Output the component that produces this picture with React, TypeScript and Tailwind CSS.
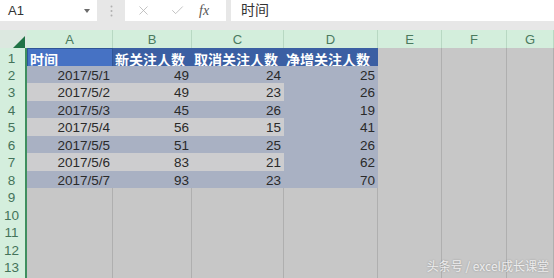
import React from "react";
import { X, Check } from "lucide-react";

const rows: [string, number, number, number][] = [
  ["2017/5/1", 49, 24, 25],
  ["2017/5/2", 49, 23, 26],
  ["2017/5/3", 45, 26, 19],
  ["2017/5/4", 56, 15, 41],
  ["2017/5/5", 51, 25, 26],
  ["2017/5/6", 83, 21, 62],
  ["2017/5/7", 93, 23, 70],
];

const cols = "grid grid-cols-[27px_86px_79px_92px_94px_64px_65px_1fr]";

const RowHead = ({ n }: { n?: number }) => (
  <div className="flex items-center justify-center border-r-2 border-r-[#3f8f5f] border-b border-b-[#bcd9c6] bg-[#d4eedd] pr-[2px] text-[13.5px] text-[#44735a]">
    {n}
  </div>
);

const Empty = () => <div className="border-r border-b border-[#afafaf] bg-[#c7c7c7]" />;

const App = () => {
  return (
    <div className="relative h-[278px] w-[554px] overflow-hidden bg-[#e7e7e7] font-['Liberation_Sans','Noto_Sans_CJK_SC',sans-serif]">
      {/* formula bar */}
      <div className="flex h-[21px]">
        <div className="flex w-[97px] items-center justify-between bg-white pl-[8px] pr-[7px] text-[13px] text-[#333]">
          <span>A1</span>
          <svg width="6" height="4" viewBox="0 0 6 4">
            <path d="M0 0h6L3 4z" fill="#6b6b6b" />
          </svg>
        </div>
        <div className="flex w-[28px] items-center justify-center">
          <svg width="3" height="12" viewBox="0 0 3 12">
            <circle cx="1.5" cy="1.5" r="1" fill="#b0b0b0" />
            <circle cx="1.5" cy="6" r="1" fill="#b0b0b0" />
            <circle cx="1.5" cy="10.5" r="1" fill="#b0b0b0" />
          </svg>
        </div>
        <div className="flex w-[101px] items-center bg-white pl-[11px]">
          <X size={15} strokeWidth={1.3} className="text-[#b5b5b5]" />
          <Check size={15} strokeWidth={1.3} className="ml-[19px] text-[#b5b5b5]" />
          <span className="ml-[14px] font-['Liberation_Serif',serif] text-[14px] italic text-[#555]">
            fx
          </span>
        </div>
        <div className="w-[5px]" />
        <div className="flex flex-1 items-center bg-white pl-[10px] text-[14px] text-[#333]">时间</div>
      </div>
      <div className="h-[9px]" />

      {/* column headers */}
      <div className={`${cols} h-[18px] border-b-2 border-b-[#3f8f5f]`}>
        <div className="flex items-end justify-end bg-[#dce8e0] pr-[2px] pb-[1px]">
          <svg width="13" height="13" viewBox="0 0 13 13">
            <path d="M13 0V13H0z" fill="#217346" />
          </svg>
        </div>
        {["A", "B", "C", "D", "E", "F", "G"].map((c) => (
          <div
            key={c}
            className="flex items-center justify-center border-r border-[#b8d8c3] bg-[#d3eedc] text-[13px] text-[#4a7a5e]"
          >
            {c}
          </div>
        ))}
      </div>

      {/* header row */}
      <div className={`${cols} h-[17.5px]`}>
        <RowHead n={1} />
        <div className="flex items-center border border-[#2f5597] bg-[#4672c4] pl-[2px] font-['Noto_Sans_CJK_SC',sans-serif] text-[14px] font-bold text-white">
          时间
        </div>
        {["新关注人数", "取消关注人数", "净增关注人数"].map((h) => (
          <div
            key={h}
            className="flex items-center border-b border-[#3a5a94] bg-[#3b5fa3] pl-[2px] font-['Noto_Sans_CJK_SC',sans-serif] text-[14px] font-bold text-white"
          >
            {h}
          </div>
        ))}
        <Empty />
        <Empty />
        <Empty />
      </div>

      {/* data rows */}
      {rows.map((r, i) => {
        const band = i % 2 === 0 ? "bg-[#a9b1c3]" : "bg-[#cdcdcf]";
        return (
          <div key={r[0]} className={`${cols} h-[17.5px] text-[13.5px] text-[#2a2a2a]`}>
            <RowHead n={i + 2} />
            <div className={`flex items-center justify-end border-b border-[#b3bac8] pr-[3px] ${band}`}>{r[0]}</div>
            <div className={`flex items-center justify-end border-b border-[#b3bac8] pr-[3px] ${band}`}>{r[1]}</div>
            <div className={`flex items-center justify-end border-b border-[#b3bac8] pr-[3px] ${band}`}>{r[2]}</div>
            <div className="flex items-center justify-end border-b border-[#b3bac8] bg-[#a9b1c3] pr-[3px]">{r[3]}</div>
            <Empty />
            <Empty />
            <Empty />
          </div>
        );
      })}

      {/* empty rows */}
      {[9, 10, 11, 12, 13, 0].map((n) => (
        <div key={n} className={`${cols} h-[17.5px]`}>
          <RowHead n={n || undefined} />
          <Empty />
          <Empty />
          <Empty />
          <Empty />
          <Empty />
          <Empty />
          <Empty />
        </div>
      ))}

      {/* watermark */}
      <div className="absolute right-[5px] bottom-[3px] font-['Noto_Sans_CJK_SC',sans-serif] text-[12px] text-white/80 [text-shadow:0_0_2px_rgba(0,0,0,0.3)]">
        头条号 / excel成长课堂
      </div>
    </div>
  );
};

export default App;
